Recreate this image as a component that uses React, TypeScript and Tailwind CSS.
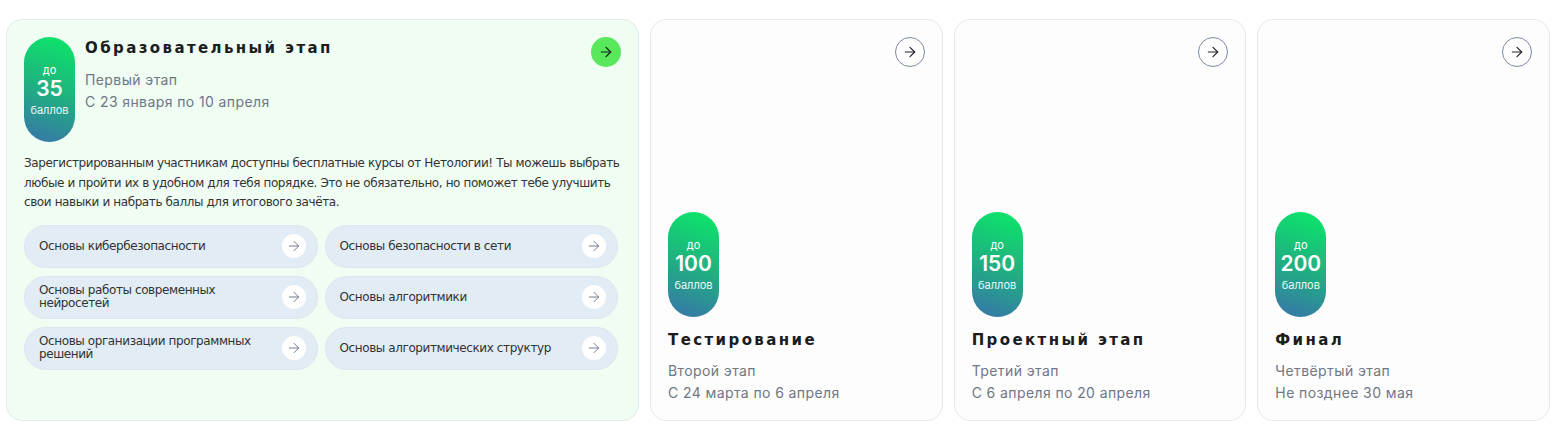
import React from 'react';
import { ArrowRight } from 'lucide-react';

const courses = [
  'Основы кибербезопасности',
  'Основы безопасности в сети',
  'Основы работы современных нейросетей',
  'Основы алгоритмики',
  'Основы организации программных решений',
  'Основы алгоритмических структур',
];

const stages = [
  { points: 100, title: 'Тестирование', step: 'Второй этап', dates: 'С 24 марта по 6 апреля' },
  { points: 150, title: 'Проектный этап', step: 'Третий этап', dates: 'С 6 апреля по 20 апреля' },
  { points: 200, title: 'Финал', step: 'Четвёртый этап', dates: 'Не позднее 30 мая' },
];

const titleFont = "font-['DejaVu_Sans',sans-serif] text-[15px] font-bold tracking-[2.4px] text-[#1c1c1c]";
const subFont = "font-['Inter',sans-serif] text-[14px] tracking-[0.4px] leading-[22px] text-[#6f7685]";

function PointsBadge({ value }: { value: number }) {
  return (
    <div className="flex h-[105px] w-[51px] shrink-0 flex-col items-center justify-center rounded-full bg-[linear-gradient(200deg,#0be968_0%,#1fb27f_50%,#3873ab_100%)] font-['Inter',sans-serif] text-white">
      <span className="text-[11px] leading-[14px]">до</span>
      <span className="text-[21px] font-semibold leading-[24px]">{value}</span>
      <span className="mt-[2px] text-[11px] leading-[14px] text-white/90">баллов</span>
    </div>
  );
}

function OutlineArrow() {
  return (
    <div className="flex h-[30px] w-[30px] items-center justify-center rounded-full border border-[#7d89a3] text-[#22222c]">
      <ArrowRight size={16} strokeWidth={1.7} />
    </div>
  );
}

function CoursePill({ name }: { name: string }) {
  return (
    <div className="flex h-[43px] items-center justify-between rounded-full border border-[#dbe6ef] bg-[#e2ecf5] pl-[14px] pr-[11px]">
      <span className="max-w-[228px] font-['DejaVu_Sans',sans-serif] text-[12px] leading-[13px] tracking-[-0.4px] text-[#333]">{name}</span>
      <div className="flex h-[24px] w-[24px] shrink-0 items-center justify-center rounded-full bg-white text-[#6b7385]">
        <ArrowRight size={16} strokeWidth={1.4} />
      </div>
    </div>
  );
}

export default function App() {
  return (
    <div className="h-[435px] w-[1560px] bg-white pl-[6px] pr-[10px] pt-[19px]">
      <div className="grid h-[402px] grid-cols-[633px_1fr_1fr_1fr] gap-[11px]">
        {/* Первый этап */}
        <div className="rounded-[16px] border border-[#e2ece6] bg-[#effdf3] p-[17px]">
          <div className="flex items-start">
            <PointsBadge value={35} />
            <div className="ml-[10px] flex-1 pt-[1px]">
              <div className={`${titleFont} leading-[20px]`}>Образовательный этап</div>
              <div className={`${subFont} mt-[11px]`}>Первый этап</div>
              <div className={subFont}>С 23 января по 10 апреля</div>
            </div>
            <div className="flex h-[30px] w-[30px] items-center justify-center rounded-full bg-[#59e75c] text-[#1c1c1c]">
              <ArrowRight size={16} strokeWidth={1.8} />
            </div>
          </div>
          <p className="mt-[12px] font-['DejaVu_Sans',sans-serif] text-[12px] leading-[19.5px] tracking-[-0.4px] text-[#333]">
            Зарегистрированным участникам доступны бесплатные курсы от Нетологии! Ты можешь выбрать любые и пройти их в удобном для тебя порядке. Это не обязательно, но поможет тебе улучшить свои навыки и набрать баллы для итогового зачёта.
          </p>
          <div className="mt-[12px] grid w-[594px] grid-cols-2 gap-x-[7px] gap-y-[8px]">
            {courses.map(c => (
              <CoursePill key={c} name={c} />
            ))}
          </div>
        </div>

        {stages.map(s => (
          <div key={s.title} className="flex flex-col rounded-[16px] border border-[#e6e8ec] bg-[#fdfdfd] p-[17px] pb-[16px]">
            <div className="flex justify-end">
              <OutlineArrow />
            </div>
            <div className="flex-1" />
            <PointsBadge value={s.points} />
            <div className={`${titleFont} mt-[13px] leading-[20px]`}>{s.title}</div>
            <div className={`${subFont} mt-[10px]`}>{s.step}</div>
            <div className={subFont}>{s.dates}</div>
          </div>
        ))}
      </div>
    </div>
  );
}
